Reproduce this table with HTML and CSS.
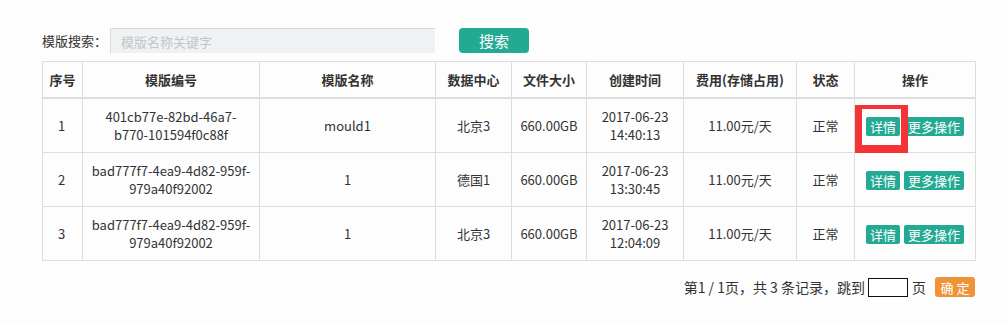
FILE: index.html
```html
<!DOCTYPE html>
<html lang="zh-CN">
<head>
  <meta charset="UTF-8">
  <title>模版管理</title>
  <link rel="stylesheet" href="styles.css">
</head>
<body>
  <div class="page">
    <!-- 搜索栏 -->
    <div class="search-bar">
      <label class="search-label" for="keyword">模版搜索：</label>
      <input type="text" id="keyword" class="search-input" placeholder="模版名称关键字">
      <button class="btn btn-search">搜索</button>
    </div>

    <!-- 模版列表 -->
    <table class="tpl-table">
      <colgroup>
        <col style="width:40px">
        <col style="width:177px">
        <col style="width:176px">
        <col style="width:76px">
        <col style="width:75px">
        <col style="width:97px">
        <col style="width:113px">
        <col style="width:58px">
        <col style="width:121px">
      </colgroup>
      <thead>
        <tr>
          <th>序号</th>
          <th>模版编号</th>
          <th>模版名称</th>
          <th>数据中心</th>
          <th>文件大小</th>
          <th>创建时间</th>
          <th>费用(存储占用)</th>
          <th>状态</th>
          <th>操作</th>
        </tr>
      </thead>
      <tbody>
        <tr>
          <td>1</td>
          <td>401cb77e-82bd-46a7-<br>b770-101594f0c88f</td>
          <td>mould1</td>
          <td>北京3</td>
          <td>660.00GB</td>
          <td>2017-06-23<br>14:40:13</td>
          <td>11.00元/天</td>
          <td>正常</td>
          <td class="ops"><span class="mark"><button class="btn btn-op">详情</button></span><button class="btn btn-op">更多操作</button></td>
        </tr>
        <tr>
          <td>2</td>
          <td>bad777f7-4ea9-4d82-959f-<br>979a40f92002</td>
          <td>1</td>
          <td>德国1</td>
          <td>660.00GB</td>
          <td>2017-06-23<br>13:30:45</td>
          <td>11.00元/天</td>
          <td>正常</td>
          <td class="ops"><button class="btn btn-op">详情</button><button class="btn btn-op">更多操作</button></td>
        </tr>
        <tr>
          <td>3</td>
          <td>bad777f7-4ea9-4d82-959f-<br>979a40f92002</td>
          <td>1</td>
          <td>北京3</td>
          <td>660.00GB</td>
          <td>2017-06-23<br>12:04:09</td>
          <td>11.00元/天</td>
          <td>正常</td>
          <td class="ops"><button class="btn btn-op">详情</button><button class="btn btn-op">更多操作</button></td>
        </tr>
      </tbody>
    </table>

    <!-- 分页 -->
    <div class="pager">
      <span>第1 / 1页，共 3 条记录，跳到</span>
      <input type="text" class="pager-input">
      <span>页</span>
      <button class="btn btn-go">确 定</button>
    </div>
  </div>
</body>
</html>
```

FILE: styles.css
```css
body {
  margin: 0;
  background-color: #fdfdfd;
  color: #333;
  font-family: "Noto Sans CJK SC", "Noto Sans", sans-serif;
  font-size: 13px;
}
.page {
  width: 933px;
  padding: 28px 0 0 42px;
}
.search-bar {
  display: flex;
  align-items: center;
  height: 25px;
}
.search-label {
  width: 68px;
}
.search-input {
  box-sizing: border-box;
  width: 325px;
  height: 25px;
  padding: 0 10px;
  border: none;
  border-left: 1px solid #d8dbdc;
  border-top: 1px solid #d8dbdc;
  background-color: #eff2f3;
  font-family: inherit;
  font-size: 13px;
  color: #333;
  outline: none;
}
.search-input::placeholder {
  color: #c2c6c8;
}
.btn {
  border: none;
  color: white;
  font-family: inherit;
  cursor: pointer;
}
.btn-search {
  width: 70px;
  height: 25px;
  margin-left: 24px;
  border-radius: 4px;
  background-color: #24a993;
  font-size: 15px;
}
.tpl-table {
  margin-top: 8px;
  width: 933px;
  table-layout: fixed;
  border-collapse: collapse;
}
.tpl-table th, .tpl-table td {
  border: 1px solid #ddd;
  text-align: center;
  line-height: 18px;
  padding: 9px 2px 8px;
}
.tpl-table th {
  font-weight: bold;
  border-bottom: 2px solid #ddd;
}
.tpl-table td:first-child {
  text-align: left;
  padding-left: 15px;
}
.ops {
  white-space: nowrap;
}
.btn-op {
  height: 19px;
  padding: 0 4px;
  margin: 0 2px;
  border-radius: 2px;
  background-color: #24a993;
  font-size: 13px;
  line-height: 19px;
  vertical-align: middle;
}
.mark {
  position: relative;
  display: inline-block;
}
.mark::after {
  content: "";
  position: absolute;
  left: -9px;
  right: -6px;
  top: -11px;
  bottom: -17px;
  border: 7px solid #f43336;
  border-top-width: 4px;
  border-bottom-width: 8px;
  pointer-events: none;
}
.pager {
  display: flex;
  justify-content: flex-end;
  align-items: center;
  margin-top: 16px;
  font-size: 14px;
}
.pager-input {
  box-sizing: border-box;
  width: 40px;
  height: 19px;
  margin: 0 4px 0 3px;
  border: 1px solid #111;
  background: white;
}
.btn-go {
  height: 20px;
  width: 40px;
  margin-left: 9px;
  padding: 0;
  border-radius: 3px;
  background-color: #ef9339;
  font-size: 13px;
}
```
